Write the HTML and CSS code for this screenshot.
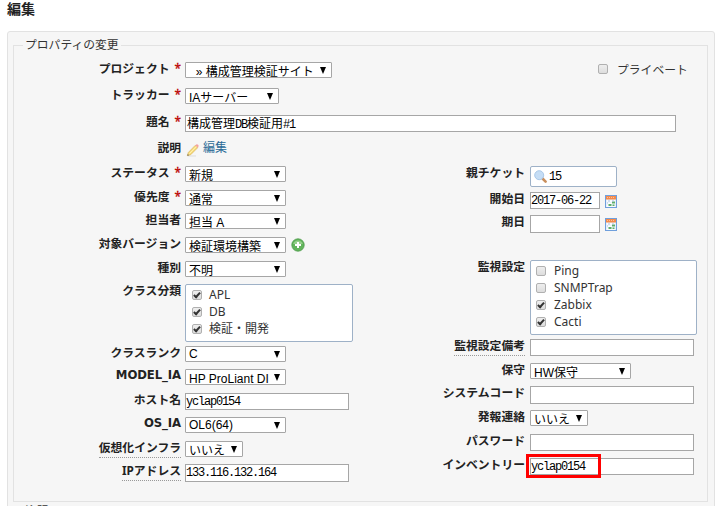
FILE: index.html
```html
<!DOCTYPE html>
<html lang="ja">
<head>
<meta charset="utf-8">
<title>編集</title>
<link rel="stylesheet" href="styles.css">
</head>
<body>
<svg width="0" height="0" class="defs">
  <defs>
    <symbol id="calendar" viewBox="0 0 12 13">
      <rect x=".5" y=".5" width="11" height="12" fill="#e8f0fa" stroke="#6f9fdc"/>
      <rect x="1" y="1" width="10" height="3.5" fill="#f58a4b"/>
      <path d="M2 2.5h8" stroke="#fbc09a" stroke-dasharray="1 1"/>
      <path d="M2 6h8M2 8.5h8M2 11h8" stroke="#fff" stroke-width="1.6"/>
      <path d="M7 6.5h3v2H7zM3.5 9h3v2h-3zM7.5 9.5h2v1.5h-2z" fill="#5fae6a"/>
      <path d="M3 6h2M7 6h2M2 8h1" stroke="#a9bfdc"/>
    </symbol>
  </defs>
</svg>
<h2>編集</h2>
<form class="box">
  <fieldset>
    <legend>プロパティの変更</legend>
    <div class="wide">
      <div class="row"><label>プロジェクト<b>*</b></label><div class="select project"><span>&nbsp; » 構成管理検証サイト</span></div>
        <div class="private"><i class="check"></i>プライベート</div></div>
      <div class="row"><label>トラッカー<b>*</b></label><div class="select tracker"><span>IAサーバー</span></div></div>
      <div class="row"><label>題名<b>*</b></label><div class="text subject">構成管理<em>DB</em>検証用<em>#1</em></div></div>
      <div class="row"><label>説明</label><a class="edit"><svg width="14" height="14" viewBox="0 0 14 14"><path d="M2 13h8" stroke="#ddd"/><path d="M2.3 9.5 9.2 2.4l2.5 2.3-7 7-3.4 1z" fill="#f7dc7c" stroke="#d9b35c" stroke-width=".7"/><path d="m9.2 2.4 1-1q1-.6 1.9.3.9 1 .3 2l-.8 1z" fill="#f3a2a0"/><path d="M3.4 10.6 10.3 3.5" stroke="#fff2b5"/><path d="m1.3 12.7.5-1.7 1.3 1.3z" fill="#666"/></svg>編集</a></div>
    </div>
    <div class="columns">
      <div class="left">
        <div class="row"><label>ステータス<b>*</b></label><div class="select"><span>新規</span></div></div>
        <div class="row"><label>優先度<b>*</b></label><div class="select"><span>通常</span></div></div>
        <div class="row"><label>担当者</label><div class="select"><span>担当 A</span></div></div>
        <div class="row"><label>対象バージョン</label><div class="select"><span>検証環境構築</span></div>
          <svg class="add" width="14" height="14" viewBox="0 0 14 14"><circle cx="7" cy="7" r="6.2" fill="#62b45c" stroke="#4b9a49" stroke-width=".8"/><path d="M2.2 6a5 5 0 0 1 9.6 0z" fill="#95cf8b"/><path d="M7 4v6M4 7h6" stroke="#fff" stroke-width="2"/></svg></div>
        <div class="row"><label>種別</label><div class="select"><span>不明</span></div></div>
        <div class="row"><label>クラス分類</label><div class="checks classes">
          <p><i class="check on"></i>APL</p><p><i class="check on"></i>DB</p><p><i class="check on"></i>検証・開発</p></div></div>
        <div class="row"><label>クラスランク</label><div class="select latin"><span>C</span></div></div>
        <div class="row"><label class="lat">MODEL_IA</label><div class="select"><span>HP ProLiant DI</span></div></div>
        <div class="row"><label>ホスト名</label><div class="text"><em>yclap0154</em></div></div>
        <div class="row"><label class="lat">OS_IA</label><div class="select latin"><span>OL6(64)</span></div></div>
        <div class="row"><label class="hint">仮想化インフラ</label><div class="select small"><span>いいえ</span></div></div>
        <div class="row"><label class="hint">IPアドレス</label><div class="text tall"><em>133.116.132.164</em></div></div>
      </div>
      <div class="right">
        <div class="row"><label>親チケット</label><div class="parent"><svg width="13" height="13" viewBox="0 0 13 13"><path d="m8 8 3.6 3.6" stroke="#c98f5d" stroke-width="2.6" stroke-linecap="round"/><circle cx="5.2" cy="5.2" r="4.5" fill="#c5ddf5" stroke="#a9c8e8"/></svg><em>15</em></div></div>
        <div class="row"><label>開始日</label><div class="text date"><em>2017-06-22</em></div><svg class="cal" width="12" height="13"><use href="#calendar"/></svg></div>
        <div class="row"><label>期日</label><div class="text date tall"></div><svg class="cal" width="12" height="13"><use href="#calendar"/></svg></div>
        <div class="row"><label>監視設定</label><div class="checks monitor">
          <p><i class="check"></i>Ping</p><p><i class="check"></i>SNMPTrap</p><p><i class="check on"></i>Zabbix</p><p><i class="check on"></i>Cacti</p></div></div>
        <div class="row"><label class="hint">監視設定備考</label><div class="text"></div></div>
        <div class="row"><label>保守</label><div class="select"><span>HW保守</span></div></div>
        <div class="row"><label>システムコード</label><div class="text tall"></div></div>
        <div class="row"><label>発報連絡</label><div class="select small"><span>いいえ</span></div></div>
        <div class="row"><label>パスワード</label><div class="text"></div></div>
        <div class="row"><label>インベントリー</label><div class="text marked"><em>yclap0154</em></div></div>
      </div>
    </div>
  </fieldset>
  <div class="next">注記</div>
</form>
</body>
</html>
```
FILE: styles.css
```css
*, *::before, *::after { box-sizing: border-box; }
html { overflow: hidden; }
body {
  margin: 0;
  height: 506px;
  overflow: hidden;
  background: #fff;
  color: #333;
  font: 12px/14px "Noto Sans", "Noto Sans CJK JP", sans-serif;
}
.defs { position: absolute; }
h2 { margin: 0; padding: 1px 0 0 7px; height: 31px; font-size: 14px; line-height: 16px; color: #222; }
.box {
  width: 708px;
  height: 500px;
  margin-left: 7px;
  padding: 6px 6px 0 5px;
  border: 1px solid #e2e2e2;
  border-radius: 3px 3px 0 0;
  background: #f6f6f6;
}
fieldset {
  width: 695px;
  height: 464px;
  margin: 0;
  padding: 0;
  border: 1px solid #e2e2e2;
  display: flow-root;
}
legend { margin-left: 9px; padding: 0 2px; height: 14px; font-size: 11.8px; line-height: 12px; }
.wide { margin-top: 10px; display: grid; grid-template-rows: 26px 27px 26px 25px; }
.columns { display: flex; }
.left { width: 345px; display: grid; grid-template-rows: 24px 23px 24px 24px 23px 62px 23px 24px 24px 24px 23px 18px; }
.right { display: grid; grid-template-rows: 26px 23px 45px 79px 24px 23px 24px 24px 24px 17px; }
.row { display: grid; grid-template-columns: 167px auto auto; column-gap: 4px; align-items: start; justify-content: start; }
.right .row { grid-template-columns: 166px auto auto; column-gap: 5px; }
label {
  justify-self: end;
  height: 14px;
  line-height: 12px;
  white-space: nowrap;
  font-weight: bold;
  font-size: 11.8px;
  color: #222;
}
label b { margin-left: 5px; color: #b00; font-weight: normal; -webkit-text-stroke: .3px #b00; }
label.lat { font-family: "DejaVu Sans", sans-serif; font-size: 11.7px; letter-spacing: -.1px; line-height: 13px; }
label.hint { height: 17px; border-bottom: 1px dotted #999; }
.select {
  position: relative;
  width: 101px;
  height: 16px;
  padding: 2px 17px 0 3px;
  border: 1px solid #a6a6a6;
  border-radius: 1px;
  background: #fff;
  overflow: hidden;
  color: #000;
  font: 12px/14px "Liberation Sans", "Noto Sans CJK JP", sans-serif;
}
.select span { display: block; height: 14px; white-space: nowrap; }
.select::after {
  content: "";
  position: absolute;
  right: 5px;
  top: 4px;
  border: solid transparent;
  border-width: 7px 3.5px 0;
  border-top-color: #000;
}
.latin { padding-top: 0; }
.project { width: 147px; }
.tracker { width: 94px; }
.small { width: 58px; }
.text {
  width: 164px;
  height: 17px;
  padding-left: 1px;
  border: 1px solid #a6a6a6;
  background: #fff;
  color: #000;
  font: 12px/14px "Noto Sans CJK JP", sans-serif;
  white-space: nowrap;
}
.tall { height: 18px; }
.subject { width: 491px; }
.date { width: 70px; }
em { font: normal 12px/14px "Liberation Mono", monospace; letter-spacing: -1.2px; }
.text > em:only-child { display: block; margin-left: -1px; padding-top: 1px; }
.private { display: flex; margin-left: 262px; height: 14px; align-items: center; gap: 9px; line-height: 14px; font-size: 11.8px; }
.edit { display: flex; gap: 3px; margin-left: 1px; color: #2a6a97; line-height: 14px; }
.edit svg { margin-top: 2px; }
.add { margin: 1px 0 0 1px; }
.cal { margin-top: 3px; }
.checks { border: 1px solid #9eb1c7; border-radius: 2px; background: #fff; }
.classes { width: 168px; height: 58px; padding: 1px 0 0 6px; }
.monitor { width: 167px; height: 75px; padding: 1px 0 0 5px; }
.checks p { display: flex; align-items: center; gap: 8px; margin: 0; height: 17px; line-height: 17px; }
.classes p { gap: 7px; }
.check {
  flex: none;
  position: relative;
  width: 10px;
  height: 10px;
  border: 1px solid #b0b0b0;
  border-radius: 2px;
  background: linear-gradient(#eee, #ddd);
}
.on::after {
  content: "";
  position: absolute;
  left: 2px;
  top: 0;
  width: 4px;
  height: 7px;
  border: solid #333;
  border-width: 0 2px 2px 0;
  transform: rotate(42deg);
}
.parent {
  display: flex;
  align-items: center;
  gap: 2px;
  width: 87px;
  height: 21px;
  padding-left: 3px;
  border: 1px solid #9eb1c7;
  border-radius: 2px;
  background: #fff;
  color: #000;
}
.marked { position: relative; }
.marked::after { content: ""; position: absolute; left: -5px; top: -5px; width: 75px; height: 24px; border: 3px solid #f00; }
.next { margin: 1px 0 0 12px; font-size: 11.8px; line-height: 14px; }
```
